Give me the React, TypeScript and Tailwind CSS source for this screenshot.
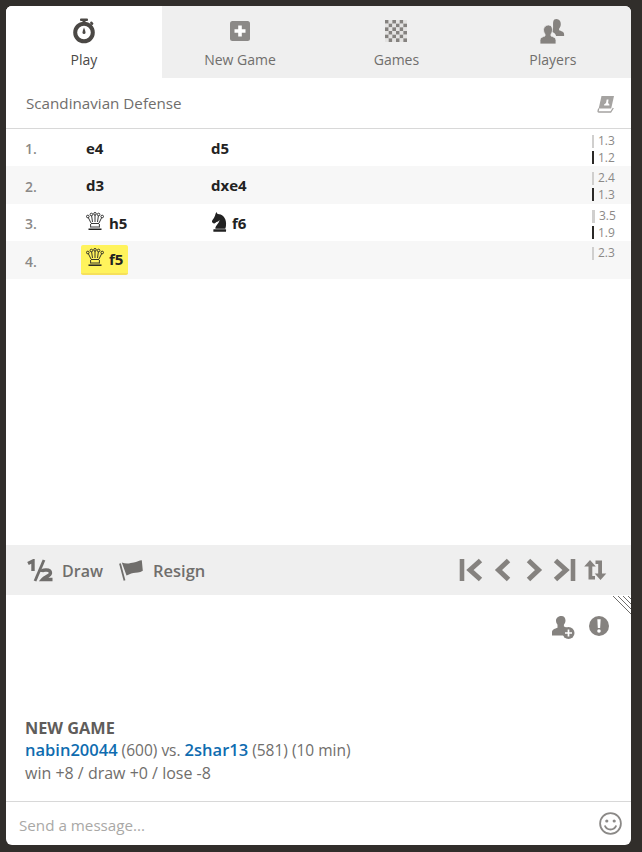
const font = { fontFamily: '"Open Sans", "Noto Sans", sans-serif' };

function Stopwatch() {
  return (
    <svg width="24" height="26" viewBox="0 0 24 26">
      <rect x="8" y="0.5" width="8" height="2.5" rx="1" fill="#4b4845" />
      <rect x="10.5" y="2" width="3" height="3" fill="#4b4845" />
      <rect x="18" y="4" width="3.5" height="2.5" rx="1" transform="rotate(45 19.7 5.2)" fill="#4b4845" />
      <circle cx="12" cy="14.5" r="8.8" fill="none" stroke="#4b4845" strokeWidth="4" />
      <path d="M12 9.5c1 2.500 1.500 4 1.500 5a1.500 1.500 0 0 1-3 0c0-1 .5-2.500 1.500-5z" fill="#4b4845" />
    </svg>
  );
}

function PlusBox() {
  return (
    <svg width="20" height="20" viewBox="0 0 20 20">
      <rect width="20" height="20" rx="2.500" fill="#8b8987" />
      <path d="M8.200 4.500h3.600v3.700h3.700v3.600h-3.700v3.700H8.200v-3.700H4.500V8.200h3.700z" fill="#fff" />
    </svg>
  );
}

function Checker() {
  const cells = [];
  for (let r = 0; r < 6; r++) {
    for (let c = 0; c < 6; c++) {
      cells.push(
        <rect key={`${r}-${c}`} x={c * 3.67} y={r * 3.67} width="3.67" height="3.67" fill={(r + c) % 2 ? "#e4e3e2" : "#85827f"} />
      );
    }
  }
  return (
    <svg width="22" height="22" viewBox="0 0 22 22">
      {cells}
    </svg>
  );
}

function PlayersIcon() {
  return (
    <svg width="25" height="25" viewBox="0 0 25 25" fill="#85827f">
      <path d="M16.500 0c2.800 0 4.300 2.200 4.300 5 0 2-.8 3.600-1.700 4.700v1.600c1.800.8 5 1.400 5 3.900v1.800h-8c-.4-2.500-2.400-3.500-4-4.300V11.500c.6-.9 1-2.100 1-3.300C13.100 3 12.700 0 16.500 0z" />
      <path d="M8.500 6c2.700 0 4 2.200 4 4.700 0 1.800-.6 3.200-1.500 4.300v2c2 .8 5 1.500 5 4.200V25H0v-3.800c0-2.700 3-3.400 5-4.200v-2c-.9-1.100-1.500-2.500-1.500-4.300C3.500 8.200 5.800 6 8.500 6z" stroke="#efefef" strokeWidth="0.800" />
    </svg>
  );
}

function BookIcon() {
  return (
    <svg className="mt-[1px]" width="18" height="18" viewBox="0 0 18 18">
      <path d="M4.500 1h12.500l-2.800 12.500H1.700z" fill="#a5a3a1" />
      <path d="M1.700 13.500L1 16.300c0 .5.300.7.800.7h11.900l2.600-4" fill="none" stroke="#a5a3a1" strokeWidth="1.300" />
      <path d="M9.700 4.500h1.800l-.4 3.500 1.300 1.500v1H7.100v-1L9 8z" fill="#fff" />
    </svg>
  );
}

function WhiteQueen() {
  return (
    <svg width="18" height="18" viewBox="0 0 18 18" fill="none" stroke="#222" strokeWidth="0.900">
      <circle cx="1.800" cy="4.500" r="1.300" />
      <circle cx="5.400" cy="2.500" r="1.300" />
      <circle cx="9" cy="1.800" r="1.300" />
      <circle cx="12.600" cy="2.500" r="1.300" />
      <circle cx="16.200" cy="4.500" r="1.300" />
      <path d="M2.300 5.600L5 11M5.600 3.700L6.500 10M9 3v7M12.400 3.700L11.500 10M15.700 5.600L13 11" />
      <path d="M5 11.500h8M4.600 12v2.800M13.400 12v2.800" />
      <path d="M2.500 17.200h13" strokeWidth="1.500" />
      <path d="M4 15h10" />
    </svg>
  );
}

function BlackKnight() {
  return (
    <svg width="16" height="20" viewBox="0 0 17 19" fill="#222" preserveAspectRatio="none">
      <path d="M5.500 0l1.600 1.800C11 1.700 16 4.500 16 11c0 2.400-.3 4-.8 5H4.600c0-3.300 3.900-4.600 4.500-8.300-1 1.300-2 1.600-3.300 1.800-.9.800-1.700 1.500-2.500 1.400C2.300 10.700.8 9.800 1 8.500 1.900 6.800 3.700 5.500 4.300 3.300z" />
      <rect x="2.500" y="16.300" width="13.500" height="2.400" rx="0.500" />
    </svg>
  );
}

function Half() {
  return (
    <svg className="shrink-0" width="27" height="23" viewBox="0 0 27 23" fill="none" stroke="#706e6c">
      <path d="M1 4.500l5-2.500v10" strokeWidth="3.400" />
      <path d="M17 1L8 22" strokeWidth="2.800" />
      <path d="M14.500 13c.5-2.500 9-3 9 1 0 3-5.500 3.500-8 6.500h10" strokeWidth="3.400" />
    </svg>
  );
}

function FlagIcon() {
  return (
    <svg width="24" height="24" viewBox="0 0 24 24">
      <path d="M1 5.500l4.500 17" stroke="#706e6c" strokeWidth="1.800" fill="none" />
      <path d="M2.800 4.500c5 2 9 .5 12 0 3-.5 5.500-2 8-2.200l1 10.500c-3 2-7 1.800-9.500 2.300-3 .5-5 2-6.800 2.400z" fill="#706e6c" />
    </svg>
  );
}

function NavIcons() {
  return (
    <div className="flex items-center">
      <svg width="24" height="24" viewBox="0 0 24 24" fill="none" stroke="#85827f">
        <path d="M3 1v22" strokeWidth="4.600" />
        <path d="M21.500 2.500L11 12l10.500 9.500" strokeWidth="5" />
      </svg>
      <svg className="ml-[11px]" width="18" height="24" viewBox="0 0 18 24" fill="none" stroke="#85827f">
        <path d="M14.500 2.500L4.500 12l10 9.500" strokeWidth="5" />
      </svg>
      <svg className="ml-[13px]" width="18" height="24" viewBox="0 0 18 24" fill="none" stroke="#85827f">
        <path d="M3.500 2.500L13.500 12 3.500 21.500" strokeWidth="5" />
      </svg>
      <svg className="ml-[10px]" width="24" height="24" viewBox="0 0 24 24" fill="none" stroke="#85827f">
        <path d="M20 1v22" strokeWidth="4.600" />
        <path d="M2.500 2.500L13 12 2.500 21.500" strokeWidth="5" />
      </svg>
      <svg className="ml-[7px]" width="23" height="22" viewBox="0 0 23 22" fill="#85827f">
        <path d="M6 1l5.800 6.500H8.300V17H11v3.500H4.500V7.500H.2z" />
        <path d="M16.500 21l-5.800-6.500h3.500V5h-2.700V1.500H18v13h4.300z" />
      </svg>
    </div>
  );
}

function AddFriendIcon() {
  return (
    <svg width="23" height="23" viewBox="0 0 23 23">
      <path d="M9.500 0c2.500 0 4 2 4 4.500 0 1.800-.8 3.200-1.600 4.200v1.800c1 .4 2.600.8 3.600 1.500-2.400 1.200-3.800 3.800-3.200 7.500H0v-3.400c0-2.600 3.200-3.500 5.500-4.300V8.700C4.700 7.700 4 6.300 4 4.500 4 2 6.500 0 9.500 0z" fill="#85827f" />
      <circle cx="16.500" cy="17" r="6" fill="#85827f" />
      <path d="M16.500 13.500v7M13 17h7" stroke="#fff" strokeWidth="1.700" />
    </svg>
  );
}

function AlertIcon() {
  return (
    <svg width="20" height="20" viewBox="0 0 19 19">
      <circle cx="9.500" cy="9.500" r="9.500" fill="#85827f" />
      <path d="M7.900 3h3.200l-.5 8.500H8.400z" fill="#fff" />
      <circle cx="9.500" cy="14.300" r="1.700" fill="#fff" />
    </svg>
  );
}

function Smiley() {
  return (
    <svg width="23" height="23" viewBox="0 0 23 23" fill="none" stroke="#8b8987" strokeWidth="1.800">
      <circle cx="11.500" cy="11.500" r="10.400" />
      <circle cx="7.800" cy="9" r="1.600" fill="#8b8987" stroke="none" />
      <circle cx="15.200" cy="9" r="1.600" fill="#8b8987" stroke="none" />
      <path d="M5.800 13.500c1.200 3 3.500 4 5.700 4s4.500-1 5.700-4" strokeWidth="2" />
    </svg>
  );
}

function ResizeCorner() {
  return (
    <svg className="absolute right-0 top-0" width="19" height="19" viewBox="0 0 19 19" stroke="#6f6d6b" strokeWidth="1">
      <path d="M1 1l18 18M6 1l13 13M11 1l8 8M16 1l3 3" />
    </svg>
  );
}

const tabs = [
  { label: "New Game", icon: <PlusBox /> },
  { label: "Games", icon: <Checker /> },
  { label: "Players", icon: <PlayersIcon /> },
];

const moves = [
  { n: "1.", white: "e4", black: "d5", times: ["1.3", "1.2"], row: "h-[37px] bg-white" },
  { n: "2.", white: "d3", black: "dxe4", times: ["2.4", "1.3"], row: "h-[38px] bg-[#f7f7f7]" },
  { n: "3.", white: "h5", whitePiece: "q", black: "f6", blackPiece: "n", times: ["3.5", "1.9"], row: "h-[37px] bg-white" },
  { n: "4.", white: "f5", whitePiece: "q", active: true, times: ["2.3"], row: "h-[38px] bg-[#f7f7f7]" },
];

function TimeBars({ times }: { times: string[] }) {
  return (
    <div className="flex w-[30px] shrink-0 flex-col self-start pt-[4px]">
      {times.map((t, i) => (
        <div key={t + i} className="flex h-[16.500px] items-center text-[12px] leading-none text-[#8b8987]">
          <span className={`mr-[4px] h-[13px] shrink-0 ${i === 0 ? "bg-[#d0cfce]" : "bg-[#2b2927]"} ${t === "3.5" ? "w-[3px]" : "w-[2px]"}`} />
          {t}
        </div>
      ))}
    </div>
  );
}

export default function App() {
  return (
    <div className="h-[852px] w-[642px] overflow-hidden bg-[#312e2b] p-[6px] pr-[11px]" style={font}>
      <div className="flex h-[839px] w-[625px] flex-col overflow-hidden rounded-[6px] bg-white">
        {/* Tabs */}
        <div className="flex h-[72px] shrink-0 bg-[#efefef]">
          <div className="flex w-[156px] flex-col items-center bg-white pt-[12px]">
            <div className="flex h-[26px] items-center"><Stopwatch /></div>
            <span className="mt-[6px] text-[14px] leading-[20px] text-[#4b4845]">Play</span>
          </div>
          {tabs.map((t) => (
            <div key={t.label} className="flex w-[156.500px] flex-col items-center pt-[12px]">
              <div className="flex h-[26px] items-center">{t.icon}</div>
              <span className="mt-[6px] text-[14px] leading-[20px] text-[#706e6c]">{t.label}</span>
            </div>
          ))}
        </div>

        {/* Opening */}
        <div className="flex h-[51px] shrink-0 items-center justify-between border-b border-[#d8d8d8] pl-[20px] pr-[16px]">
          <span className="text-[15.200px] text-[#706e6c]">Scandinavian Defense</span>
          <BookIcon />
        </div>

        {/* Moves */}
        <div className="flex-1">
          {moves.map((m) => (
            <div key={m.n} className={`flex items-center ${m.row}`}>
              <span className="w-[75px] pl-[19px] pt-[2px] text-[14px] font-semibold text-[#8b8987]">{m.n}</span>
              <div className="w-[130px] pl-[5px]">
                <span className={`inline-flex h-[30px] items-center gap-[5px] rounded-[2px] text-[15px] font-bold text-[#222] ${m.active ? "-ml-[5px] border-b-2 border-[#f6e05a] bg-[#fff35c] px-[5px]" : ""}`}>
                  {m.whitePiece && <span className="-mt-[4px]"><WhiteQueen /></span>}
                  <span className="pt-[1px]">{m.white}</span>
                </span>
              </div>
              <div className="w-[381px]">
                <span className="inline-flex h-[30px] items-center gap-[5px] text-[15px] font-bold text-[#222]">
                  {m.blackPiece && <span className="-mt-[2px]"><BlackKnight /></span>}
                  <span className="pt-[1px]">{m.black}</span>
                </span>
              </div>
              <TimeBars times={m.times} />
            </div>
          ))}
        </div>

        {/* Controls */}
        <div className="flex h-[50px] shrink-0 items-center bg-[#efefef] pl-[21px] pr-[24px]">
          <Half />
          <span className="ml-[8px] pt-[2px] text-[16px] font-semibold text-[#706e6c]">Draw</span>
          <div className="ml-[16px]"><FlagIcon /></div>
          <span className="ml-[10px] pt-[2px] text-[16.500px] font-semibold text-[#706e6c]">Resign</span>
          <div className="ml-auto"><NavIcons /></div>
        </div>

        {/* Chat */}
        <div className="relative flex h-[206px] shrink-0 flex-col px-[19px]">
          <ResizeCorner />
          <div className="flex justify-end gap-[14px] pr-[3px] pt-[21px]">
            <AddFriendIcon />
            <AlertIcon />
          </div>
          <div className="mt-auto pb-[17px] text-[16px] leading-[22px] text-[#706e6c]">
            <div className="text-[16.300px] font-bold text-[#5f5d5b]">NEW GAME</div>
            <div className="mb-[1px] text-[15.500px]">
              <span className="text-[16.500px] font-semibold text-[#0f6cb0]">nabin20044</span> (600) vs.{" "}
              <span className="text-[16.500px] font-semibold text-[#0f6cb0]">2shar13</span> (581) (10 min)
            </div>
            <div>win +8 / draw +0 / lose -8</div>
          </div>
        </div>

        {/* Input */}
        <div className="flex h-[44px] shrink-0 items-center justify-between border-t border-[#d8d8d8] pl-[13px] pr-[9px]">
          <span className="pt-[3px] text-[15.200px] text-[#a9a8a6]">Send a message...</span>
          <Smiley />
        </div>
      </div>
    </div>
  );
}
